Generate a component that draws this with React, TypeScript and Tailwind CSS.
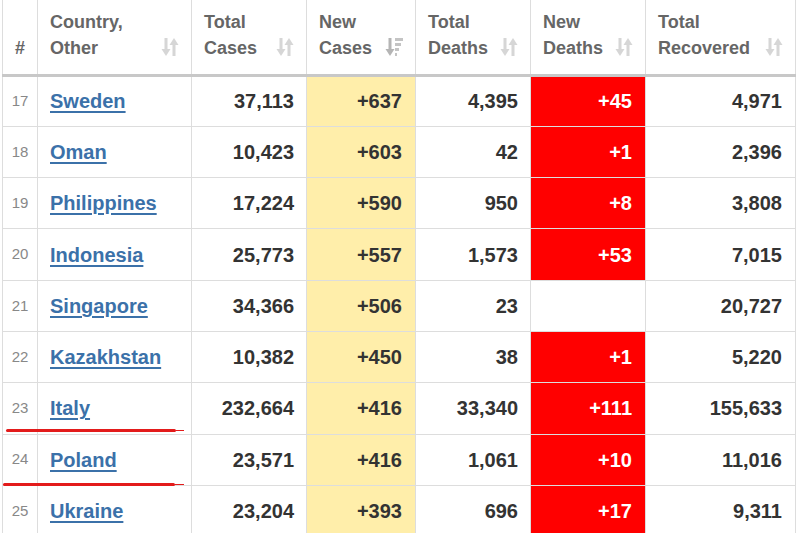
import React from "react";

type Row = {
  n: number;
  country: string;
  total: string;
  newCases: string;
  deaths: string;
  newDeaths: string;
  recovered: string;
};

const rows: Row[] = [
  { n: 17, country: "Sweden", total: "37,113", newCases: "+637", deaths: "4,395", newDeaths: "+45", recovered: "4,971" },
  { n: 18, country: "Oman", total: "10,423", newCases: "+603", deaths: "42", newDeaths: "+1", recovered: "2,396" },
  { n: 19, country: "Philippines", total: "17,224", newCases: "+590", deaths: "950", newDeaths: "+8", recovered: "3,808" },
  { n: 20, country: "Indonesia", total: "25,773", newCases: "+557", deaths: "1,573", newDeaths: "+53", recovered: "7,015" },
  { n: 21, country: "Singapore", total: "34,366", newCases: "+506", deaths: "23", newDeaths: "", recovered: "20,727" },
  { n: 22, country: "Kazakhstan", total: "10,382", newCases: "+450", deaths: "38", newDeaths: "+1", recovered: "5,220" },
  { n: 23, country: "Italy", total: "232,664", newCases: "+416", deaths: "33,340", newDeaths: "+111", recovered: "155,633" },
  { n: 24, country: "Poland", total: "23,571", newCases: "+416", deaths: "1,061", newDeaths: "+10", recovered: "11,016" },
  { n: 25, country: "Ukraine", total: "23,204", newCases: "+393", deaths: "696", newDeaths: "+17", recovered: "9,311" },
];

function SortIcon({ active }: { active?: boolean }) {
  if (active) {
    return (
      <svg width="18" height="20" viewBox="0 0 18 20" className="shrink-0">
        <rect x="3.5" y="1" width="3" height="13" fill="#b5b5b5" />
        <polygon points="0.5,12 9.5,12 5,19" fill="#b5b5b5" />
        <rect x="10" y="1" width="8" height="3" fill="#c4c4c4" />
        <rect x="10" y="6" width="6" height="3" fill="#c4c4c4" />
        <rect x="10" y="11" width="4" height="3" fill="#c4c4c4" />
        <rect x="10" y="16" width="2" height="3" fill="#c4c4c4" />
      </svg>
    );
  }
  return (
    <svg width="18" height="20" viewBox="0 0 18 20" className="shrink-0">
      <rect x="3.5" y="1" width="3" height="13" fill="#d6d6d6" />
      <polygon points="0.5,12 9.5,12 5,19" fill="#d6d6d6" />
      <rect x="11.5" y="6" width="3" height="13" fill="#d6d6d6" />
      <polygon points="8.5,8 17.5,8 13,1" fill="#d6d6d6" />
    </svg>
  );
}

function Head({ top, bottom, active }: { top: string; bottom: string; active?: boolean }) {
  return (
    <th className="h-[75px] border-x border-b-[3px] border-x-[#ddd] border-b-[#c8c8c8] px-[12px] pb-[13px] align-bottom text-left font-bold">
      <div className="flex items-end justify-between">
        <div className="leading-[26px]">
          {top}
          <br />
          {bottom}
        </div>
        <div className="mb-[4px]">
          <SortIcon active={active} />
        </div>
      </div>
    </th>
  );
}

export default function App() {
  return (
    <div className="relative h-[533px] w-[800px] overflow-hidden bg-white pl-[2px] font-['Liberation_Sans',Arial,sans-serif]">
      <table className="w-[793px] table-fixed border-collapse">
        <colgroup>
          <col className="w-[35px]" />
          <col className="w-[154px]" />
          <col className="w-[115px]" />
          <col className="w-[109px]" />
          <col className="w-[115px]" />
          <col className="w-[115px]" />
          <col className="w-[150px]" />
        </colgroup>
        <thead className="text-[18px] text-[#666]">
          <tr>
            <th className="h-[75px] border-x border-b-[3px] border-x-[#ddd] border-b-[#c8c8c8] pb-[13px] text-center align-bottom font-bold leading-[26px]">
              #
            </th>
            <Head top="Country," bottom="Other" />
            <Head top="Total" bottom="Cases" />
            <Head top="New" bottom="Cases" active />
            <Head top="Total" bottom="Deaths" />
            <Head top="New" bottom="Deaths" />
            <Head top="Total" bottom="Recovered" />
          </tr>
        </thead>
        <tbody className="text-[20px] font-bold text-[#333]">
          {rows.map((r) => (
            <tr key={r.n} className="h-[51.3px]">
              <td className="border border-[#ddd] text-center text-[15px] font-normal text-[#888]">{r.n}</td>
              <td className="border border-[#ddd] px-[12px] text-left">
                <a className="text-[#3b71a9] underline decoration-[1.5px] underline-offset-[3px]">{r.country}</a>
              </td>
              <td className="border border-[#ddd] px-[12px] text-right">{r.total}</td>
              <td className="border border-[#ddd] bg-[#ffeeaa] px-[13px] text-right">{r.newCases}</td>
              <td className="border border-[#ddd] px-[12px] text-right">{r.deaths}</td>
              <td
                className={
                  r.newDeaths
                    ? "border border-[#ddd] bg-[#ff0000] px-[13px] text-right text-white"
                    : "border border-[#ddd] px-[13px] text-right"
                }
              >
                {r.newDeaths}
              </td>
              <td className="border border-[#ddd] px-[13px] text-right">{r.recovered}</td>
            </tr>
          ))}
        </tbody>
      </table>

      {/* hand-drawn annotation strokes */}
      <div className="absolute left-[6px] top-[429px] h-[3px] w-[170px] rounded-full bg-[#e31b1b]" />
      <div className="absolute left-[176px] top-[430px] h-[1px] w-[8px] bg-[#e31b1b]" />
      <div className="absolute left-[3px] top-[483px] h-[3px] w-[172px] rounded-full bg-[#e31b1b]" />
      <div className="absolute left-[175px] top-[484px] h-[1px] w-[9px] bg-[#e31b1b]" />
    </div>
  );
}
